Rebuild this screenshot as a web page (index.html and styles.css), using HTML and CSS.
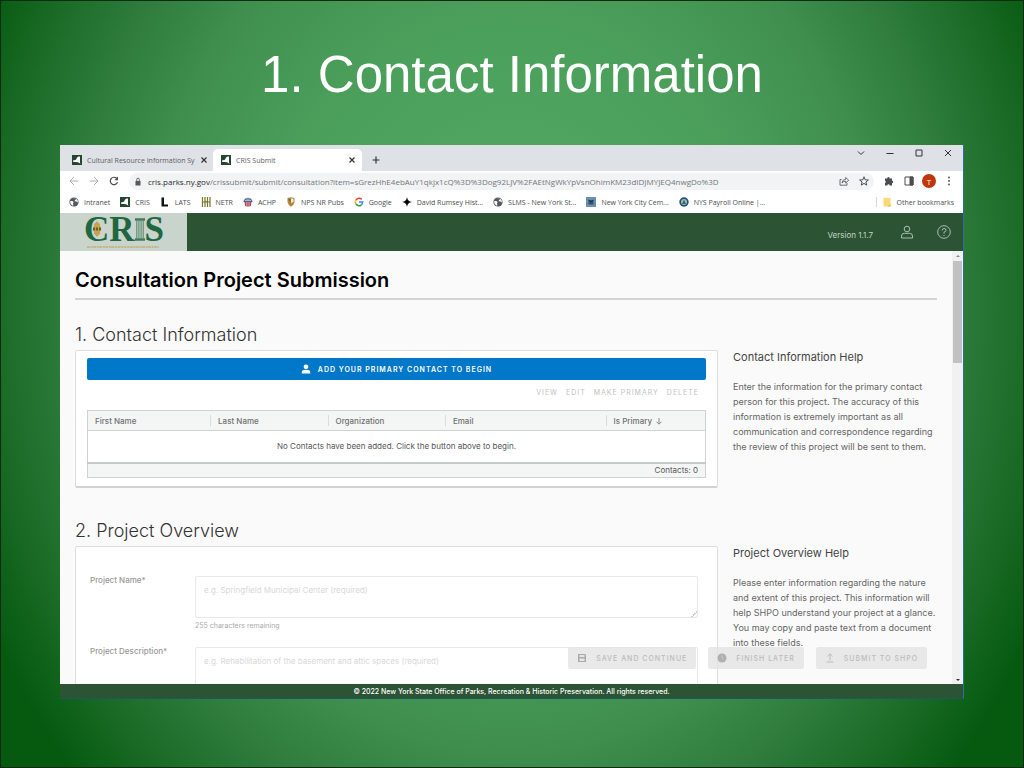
FILE: index.html
```html
<!DOCTYPE html>
<html lang="en">
<head>
<meta charset="utf-8">
<title>1. Contact Information</title>
<link rel="stylesheet" href="styles.css">
</head>
<body>
<svg class="defs" aria-hidden="true">
  <symbol id="ny" viewBox="0 0 10 10"><rect width="10" height="10" fill="#25452f"/><path d="M1 6.800V5.500l3-.7L5 2.500 6.500 1.500h1.500v6.200l.6 1.100L6 7.300z" fill="#fff"/></symbol>
  <symbol id="globe" viewBox="0 0 10 10"><circle cx="5" cy="5" r="4.600" fill="#55595e"/><path d="M1 4.200 3.500 4l1.200 1.300-.9 1 .6 1.700-.6.700Q1.100 7.500 1 4.200zM4 1.200l2.500.1.800 1-1.300.8-.3 1.200 2 .3 1 .9-.7 1.700Q9.600 5 8.500 3 6.500.2 4 1.200z" fill="#fff"/></symbol>
  <symbol id="close" viewBox="0 0 8 8"><path d="m1.500 1.500 5 5m0-5-5 5" stroke="currentColor" stroke-width="1.200" fill="none"/></symbol>
</svg>
<main class="slide">
  <h1 class="slide-title">1. Contact Information</h1>
  <section class="window">
    <div class="tabstrip">
      <div class="tab">
        <svg class="fav"><use href="#ny"/></svg>
        <span class="tab-label">Cultural Resource Information Sy</span>
        <button class="tab-close" aria-label="Close tab"><svg><use href="#close"/></svg></button>
      </div>
      <div class="tab tab-active">
        <svg class="fav"><use href="#ny"/></svg>
        <span class="tab-label">CRIS Submit</span>
        <button class="tab-close" aria-label="Close tab"><svg><use href="#close"/></svg></button>
      </div>
      <button class="new-tab" aria-label="New tab"><svg viewBox="0 0 8 8"><path d="M4 .5v7M.5 4h7" stroke="#333" stroke-width="1.200"/></svg></button>
      <div class="window-controls">
        <button aria-label="Search tabs"><svg viewBox="0 0 8 8"><path d="m1 2.500 3 3 3-3" /></svg></button>
        <button aria-label="Minimize"><svg viewBox="0 0 8 8"><path d="M.5 4.500h7"/></svg></button>
        <button aria-label="Maximize"><svg viewBox="0 0 8 8"><path d="M1 1h6v6H1z"/></svg></button>
        <button aria-label="Close"><svg viewBox="0 0 8 8"><path d="m1 1 6 6m0-6L1 7"/></svg></button>
      </div>
    </div>
    <div class="toolbar">
      <button aria-label="Back"><svg class="faded" viewBox="0 0 10 10"><path d="M9.500 5H1m4-4L1 5l4 4"/></svg></button>
      <button aria-label="Forward"><svg class="faded" viewBox="0 0 10 10"><path d="M.5 5H9M5 1l4 4-4 4"/></svg></button>
      <button aria-label="Reload"><svg viewBox="0 0 10 10"><path d="M8.500 6.200A3.700 3.700 0 1 1 7.800 2.500" stroke-width="1.200"/><path d="M9 .6v3.600H5.400z" fill="#4a4d51" stroke="none"/></svg></button>
      <div class="address">
        <svg class="lock" viewBox="0 0 8 9"><path d="M1.500 4h5v4.500h-5z" fill="#55585c" stroke="none"/><path d="M2.700 4V2.500a1.300 1.300 0 0 1 2.600 0V4" fill="none" stroke="#55585c" stroke-width=".9"/></svg>
        <span class="url"><b>cris.parks.ny.gov</b>/crissubmit/submit/consultation?item=sGrezHhE4ebAuY1qkjx1cQ%3D%3Dog92LJV%2FAEtNgWkYpVsnOhimKM23dIDJMYJEQ4nwgDo%3D</span>
        <button aria-label="Share"><svg viewBox="0 0 10 10"><path d="M2.500 3.500H1v5.700h7V7M3 7q.2-3.500 3.700-3.700V1.500l3 2.800-3 2.700V5.200Q4.200 5.200 3 7z" stroke-width=".8"/></svg></button>
        <button aria-label="Bookmark"><svg viewBox="0 0 10 10"><path d="m5 .8 1.200 3 3.200.2-2.500 2 .8 3.100L5 7.400 2.300 9.100l.8-3.100-2.500-2 3.200-.2z"/></svg></button>
      </div>
      <button aria-label="Extensions"><svg viewBox="0 0 10 10"><path d="M1 2.500h2.300a1.200 1.200 0 1 1 2.300 0H8v2.300a1.200 1.200 0 1 1 0 2.400v2.300H5.700a1.200 1.200 0 0 0-2.400 0H1V7a1.200 1.200 0 0 0 0-2.300z" fill="#4a4d51" stroke="none"/></svg></button>
      <button aria-label="Side panel"><svg viewBox="0 0 10 10"><path d="M1 1h8v8H1z"/><path d="M6 1h3v8H6z" fill="#4a4d51"/></svg></button>
      <button class="avatar" aria-label="Profile T">T</button>
      <button aria-label="Menu"><svg viewBox="0 0 10 10"><g fill="#4a4d51" stroke="none"><circle cx="5" cy="1.500" r=".9"/><circle cx="5" cy="5" r=".9"/><circle cx="5" cy="8.500" r=".9"/></g></svg></button>
    </div>
    <nav class="bookmarks">
      <a href="#"><svg><use href="#globe"/></svg>Intranet</a>
      <a href="#"><svg><use href="#ny"/></svg>CRIS</a>
      <a href="#"><svg viewBox="0 0 10 10"><path d="M1.500.500h2.500V7.500H8V9.500H1.500z" fill="#111"/></svg>LATS</a>
      <a href="#"><svg viewBox="0 0 10 10"><path d="M1.500 0v10M4 0v10M1.500 5H4M6.500 0v10M9 0v10M6.500 5H9M4 4l2.500 1.500" stroke="#75752b" stroke-width="1.200"/></svg>NETR</a>
      <a href="#"><svg viewBox="0 0 10 10"><path d="M.5 5a4.500 4.300 0 0 1 9 0z" fill="#53658d"/><path d="M1 5h8L7.500 9.500h-5z" fill="#d9a0ac"/><path d="M2.500 5v4M4.200 5v4.500M5.900 5v4.500M7.500 5v4" stroke="#a13a50" stroke-width=".8"/><path d="M2 3.500h6M3 2h4" stroke="#d7dceb" stroke-width=".7"/></svg>ACHP</a>
      <a href="#"><svg viewBox="0 0 10 10"><path d="M1.500 1 5 .3 8.500 1v4Q8 7.700 5 9.800 2 7.700 1.500 5z" fill="#b9823b"/><path d="M5 1.500h2.500V5L5 6z" fill="#f3edd2"/><path d="M2.500 2h2v4z" fill="#4c793c"/></svg>NPS NR Pubs</a>
      <a href="#"><svg viewBox="0 0 10 10" fill="none" stroke-width="1.600"><path d="M2 3A3.600 3.600 0 0 1 7.700 2.400" stroke="#e84435"/><path d="M2 7a3.600 3.600 0 0 1 0-4" stroke="#f5b912"/><path d="M7.300 8A3.600 3.600 0 0 1 2 7" stroke="#32a350"/><path d="M5 5h3.700Q8.500 7 7.300 8" stroke="#4285f4"/></svg>Google</a>
      <a href="#"><svg viewBox="0 0 10 10"><path d="M5 0q.5 4.500 5 5-4.500.5-5 5Q4.500 5.500 0 5 4.500 4.500 5 0z" fill="#111"/><circle cx="5" cy="5" r="1.600"/></svg>David Rumsey Hist...</a>
      <a href="#"><svg><use href="#globe"/></svg>SLMS - New York St...</a>
      <a href="#"><svg viewBox="0 0 10 10"><path d="M0 0h10v10H0z" fill="#6b8fae"/><path d="M2.500 3h5v4.500h-5z" fill="#36516e"/><path d="m2.500 3 2.500 2 2.500-2" stroke="#1e3042" fill="none"/></svg>New York City Cem...</a>
      <a href="#"><svg viewBox="0 0 10 10"><circle cx="5" cy="5" r="4.700" fill="#204f7d"/><circle cx="5" cy="5" r="3" fill="#a4c3b2"/><path d="m5 2.500 2 4.500H3z" fill="#397151"/></svg>NYS Payroll Online |...</a>
      <a href="#" class="other"><svg viewBox="0 0 10 10"><path d="M1.500.8h7v8.700h-7z" fill="#f9d978"/><path d="M5.500 9.500h3V7z" fill="#e9b94b"/></svg>Other bookmarks</a>
    </nav>

    <header class="app-header">
      <div class="logo">
        <div class="wordmark">
          <span>CR</span>
          <svg class="pillar" viewBox="0 0 11 25" role="img" aria-label="I"><path d="M0 0h11v3H0zM0 22h11v3H0z" fill="#41795a"/><path d="M2 3v19M4.300 3v19M6.700 3v19M9 3v19" stroke="#41795a"/></svg>
          <span>S</span>
          <svg class="emblem" viewBox="0 0 10 16"><path d="M5 0q1 2 3 3-.5 2 1 5-1.500 3-1 5-2 1-3 3-1-2-3-3 .5-2-1-5 1.500-3 1-5 2-1 3-3z" fill="#c5a34b"/><path d="M1 8h8" stroke="#705d28" stroke-width="3" stroke-dasharray="2 1"/></svg>
        </div>
        <svg class="tagline" viewBox="0 0 72 2"><path d="M0 1h72" stroke="#c3ae7d" stroke-width="1.500" stroke-dasharray="3 .6 2 .5"/></svg>
      </div>
      <span class="version">Version 1.1.7</span>
      <button aria-label="Account"><svg viewBox="0 0 14 14"><circle cx="7" cy="4" r="2.800"/><path d="M1.500 13v-2q0-2.700 3-2.700h5q3 0 3 2.700v2z"/></svg></button>
      <button aria-label="Help"><svg viewBox="0 0 14 14"><circle cx="7" cy="7" r="6.300"/><path d="M5.200 5.500q0-2 1.900-2t1.900 1.800Q9 6.600 7 7.200v1.500M7 10v1"/></svg></button>
    </header>

    <div class="viewport">
      <div class="page">
        <h2 class="page-title">Consultation Project Submission</h2>
        <section class="section">
          <h3>1. Contact Information</h3>
          <div class="columns">
            <div class="card contacts">
              <button class="primary"><svg viewBox="0 0 10 10"><circle cx="5" cy="2.800" r="2.400" fill="#fff"/><path d="M.8 9.500V8.200Q.8 5.800 5 5.800t4.200 2.400v1.300z" fill="#fff"/></svg>ADD YOUR PRIMARY CONTACT TO BEGIN</button>
              <div class="actions">
                <button disabled>VIEW</button><button disabled>EDIT</button><button disabled>MAKE PRIMARY</button><button disabled>DELETE</button>
              </div>
              <table class="grid">
                <thead><tr><th class="c1">First Name</th><th class="c2">Last Name</th><th class="c2">Organization</th><th class="c3">Email</th><th>Is Primary <svg viewBox="0 0 6 7"><path d="M3 0v6M.5 3.700 3 6.200l2.500-2.500"/></svg></th></tr></thead>
                <tbody><tr><td colspan="5">No Contacts have been added. Click the button above to begin.</td></tr></tbody>
                <tfoot><tr><td colspan="5">Contacts: 0</td></tr></tfoot>
              </table>
            </div>
            <aside class="help">
              <h4>Contact Information Help</h4>
              <p>Enter the information for the primary contact person for this project. The accuracy of this information is extremely important as all communication and correspondence regarding the review of this project will be sent to them.</p>
            </aside>
          </div>
        </section>
        <section class="section">
          <h3>2. Project Overview</h3>
          <div class="columns">
            <div class="card overview">
              <label for="name">Project Name*</label>
              <div class="field">
                <textarea id="name" placeholder="e.g. Springfield Municipal Center (required)"></textarea>
                <span>255 characters remaining</span>
              </div>
              <label for="desc">Project Description*</label>
              <div class="field">
                <textarea id="desc" placeholder="e.g. Rehabilitation of the basement and attic spaces (required)"></textarea>
              </div>
            </div>
            <aside class="help">
              <h4>Project Overview Help</h4>
              <p>Please enter information regarding the nature and extent of this project. This information will help SHPO understand your project at a glance. You may copy and paste text from a document into these fields.</p>
            </aside>
          </div>
        </section>
      </div>
      <div class="scrollbar"><i class="up"></i><i class="thumb"></i><i class="down"></i></div>
      <div class="floating">
        <button disabled><svg viewBox="0 0 10 10"><path d="M1 1h7l1 1v7H1z" fill="#aaa"/><path d="M2.500 2h5v2h-5zM2.500 5.500h5V8h-5z" fill="#e6e6e6"/></svg>SAVE AND CONTINUE</button>
        <button disabled><svg viewBox="0 0 10 10"><circle cx="5" cy="5" r="4.500" fill="#b0b0b0"/><path d="M5 2.500V5l1.500 1" stroke="#c8c8c8" fill="none"/></svg>FINISH LATER</button>
        <button disabled><svg viewBox="0 0 10 10"><path d="M5 7.500V1M2.500 3.200 5 .8l2.500 2.400M1.500 9h7" stroke="#bdbdbd" fill="none"/></svg>SUBMIT TO SHPO</button>
      </div>
    </div>
    <footer class="app-footer">© 2022 New York State Office of Parks, Recreation &amp; Historic Preservation. All rights reserved.</footer>
  </section>
</main>
</body>
</html>
```
FILE: styles.css
```css
* { box-sizing: border-box; }
body { margin: 0; }
.defs { position: absolute; width: 0; height: 0; }
button { border: 0; padding: 0; background: none; color: inherit; font: inherit; letter-spacing: inherit; display: flex; align-items: center; justify-content: center; }
h1, h2, h3, h4, p { margin: 0; font-weight: 400; }

.slide {
  height: 100vh;
  display: flex;
  flex-direction: column;
  padding: 0 59px 68px;
  border: 1px solid #0b2c12;
  background: radial-gradient(ellipse 62% 100% at 50% 40%, #54ae65 0, #4a9e5a 40%, #3f8e4d 58%, #2f7c3d 70%, #1a6a25 82%, #055a10 92%);
}
.slide-title {
  height: 144px;
  line-height: 148px;
  text-align: center;
  color: #fff;
  font-family: "Liberation Sans", sans-serif;
  font-size: 51px;
}
.window {
  flex: 1;
  min-height: 0;
  display: flex;
  flex-direction: column;
  border-right: 1px solid #2c6f9c;
  border-bottom: 1px solid #175a62;
  background: #fff;
  font-family: Inter, sans-serif;
}

.tabstrip { display: flex; height: 26px; padding: 4px 9px 0 8px; background: #dee1e6; font-family: "Open Sans", sans-serif; }
.tab { display: flex; align-items: center; gap: 5px; width: 145px; padding: 0 5px 0 4px; color: #5c6064; font-size: 7px; }
.tab-active { width: 149px; padding: 0 6px 0 8px; background: #fff; border-radius: 5px 5px 0 0; }
.fav { width: 10px; height: 10px; flex: none; }
.tab-label { flex: 1; overflow: hidden; white-space: nowrap; }
.tab-close svg { width: 8px; height: 8px; color: #333; }
.new-tab { margin-left: 10px; }
.new-tab svg { width: 8px; height: 8px; }
.window-controls { display: flex; align-items: flex-start; gap: 21px; margin-left: auto; padding-right: 2px; }
.window-controls svg { width: 8px; height: 8px; fill: none; stroke: #333; }

.toolbar { display: flex; align-items: center; gap: 10px; height: 20px; padding: 0 9px; font-family: "Open Sans", sans-serif; }
.toolbar svg { display: block; width: 10px; height: 10px; fill: none; stroke: #4a4d51; }
.toolbar .faded { stroke: #aeb1b4; }
.address { flex: 1; display: flex; align-items: center; gap: 10px; height: 17px; padding: 0 5px; border-radius: 9px; background: #f1f3f4; font-size: 8px; color: #74777b; }
.address .lock { width: 8px; height: 9px; margin-right: -4px; }
.url { flex: 1; overflow: hidden; white-space: nowrap; }
.url b { font-weight: 400; color: #2a2c2f; }
.avatar { width: 14px; height: 14px; margin: 0 -2px; border-radius: 50%; background: #bf360c; color: #fff; font-size: 8px; }

.bookmarks { display: flex; align-items: center; gap: 10px; height: 22px; padding: 0 9px; font: 7px "Open Sans", sans-serif; }
.bookmarks a { display: flex; align-items: center; gap: 5px; color: #4a4d51; text-decoration: none; white-space: nowrap; }
.bookmarks svg { width: 10px; height: 10px; }
.bookmarks .other { margin-left: auto; padding-left: 5px; border-left: 1px solid #d5d7da; }

.app-header { display: flex; align-items: center; height: 38px; padding-right: 12px; background: #2b5334; color: #c4d6c7; }
.logo { align-self: stretch; width: 127px; margin-right: auto; padding-left: 24px; background: #c9d4cd; }
.wordmark { position: relative; display: flex; align-items: center; height: 33px; color: #20663f; font: 700 35px/33px "Liberation Serif", serif; }
.pillar { width: 10px; height: 25px; }
.emblem { position: absolute; left: 8px; top: 8px; width: 10px; height: 16px; }
.tagline { display: block; width: 72px; height: 2px; margin-left: 3px; }
.version { padding-top: 6px; font-size: 8px; }
.app-header button { margin-left: 23px; }
.version + button { margin-left: 27px; }
.app-header button svg { width: 14px; height: 14px; fill: none; stroke: #a8c2ad; }

.viewport { position: relative; flex: 1; min-height: 0; display: flex; overflow: hidden; background: #fafafa; }
.page { flex: 1; min-width: 0; padding: 0 15px; }
.page-title { height: 49px; line-height: 58px; border-bottom: 2px solid #d2d4d4; color: #000; font-size: 20px; font-weight: 600; }
.section h3 { height: 50px; padding-top: 23px; line-height: 24px; color: #333; font-size: 18px; font-weight: 300; }
.section + .section h3 { height: 58px; padding-top: 31px; }
.columns { display: grid; grid-template-columns: 643fr 219fr; }
.card { border: 1px solid #dedede; border-radius: 2px; background: #fff; }
.contacts { padding: 7px 11px 8px; border-bottom: 2px solid #d2d2d2; }
.primary { width: 100%; height: 22px; gap: 7px; border-radius: 2px; background: #0077c8; color: #fff; font-size: 7px; font-weight: 600; letter-spacing: 1px; }
.primary svg { width: 10px; height: 10px; }
.actions { display: flex; justify-content: flex-end; gap: 8px; height: 30px; padding: 6px 7px 0 0; color: #bfbfbf; font-size: 7px; letter-spacing: 1px; }
.actions button { height: 12px; }
.grid { width: 100%; table-layout: fixed; border-collapse: collapse; border: 1px solid #cfd3d3; color: #565656; font-size: 8px; }
.grid th { height: 20px; padding: 0 7px; background: linear-gradient(#d9dcdc, #d9dcdc) right / 1px 11px no-repeat #f4f6f6; text-align: left; font-weight: 500; color: #707070; }
.grid th:last-child { background: #f4f6f6; }
.grid th svg { width: 6px; height: 7px; margin-left: 2px; fill: none; stroke: #888; vertical-align: middle; }
.c1 { width: 20%; }
.c2 { width: 19%; }
.c3 { width: 26%; }
.grid tbody td { height: 32px; padding: 0; border-top: 1px solid #cfd3d3; border-bottom: 2px solid #c6caca; background: #fff; text-align: center; }
.grid tfoot td { height: 15px; padding: 0 7px; background: #f4f6f6; text-align: right; }

.help { padding-left: 15px; color: #666; }
.help h4 { line-height: 14px; color: #444; font-size: 11px; }
.help p { padding-top: 15px; font-size: 9px; line-height: 15px; }
.overview { display: grid; grid-template-columns: 105px 1fr; align-content: start; padding: 29px 19px 0 14px; height: 240px; color: #999; font-size: 8px; }
.overview label { font-weight: 500; line-height: 8px; }
.field { display: flex; flex-direction: column; height: 71px; }
.field textarea { width: 100%; height: 42px; padding: 8px; border: 1px solid #e9e9e9; border-radius: 2px; background: #fff; font: 8px Inter, sans-serif; }
#desc { height: 100px; }
.field textarea::placeholder { color: #d8d8d8; }
.field textarea::-webkit-resizer { background: linear-gradient(135deg, transparent 50%, #ccc 50%, #ccc 62%, transparent 62%) right bottom / 6px 6px no-repeat; }
.field span { padding-top: 3px; font-size: 7px; color: #aaa; }

.scrollbar { display: flex; flex-direction: column; align-items: center; width: 11px; padding: 4px 0 3px; background: #f1f1f1; }
.scrollbar i { border: 2px solid transparent; }
.scrollbar .up { border-bottom-color: #888; border-top: 0; }
.scrollbar .down { margin-top: auto; border-top-color: #333; border-bottom: 0; }
.scrollbar .thumb { width: 9px; height: 102px; margin-top: 4px; border: 0; background: #c1c1c1; }
.floating { position: absolute; right: 36px; bottom: 15px; display: flex; gap: 12px; }
.floating button { height: 22px; padding: 0 9px; gap: 9px; border-radius: 2px; background: rgba(225, 225, 225, .75); color: #bcbcbc; font-size: 7px; font-weight: 500; letter-spacing: 1px; }
.floating svg { width: 10px; height: 10px; }
.app-footer { height: 14px; background: #2b5334; color: #fff; text-align: center; line-height: 15px; font-size: 7px; font-weight: 500; }
```
